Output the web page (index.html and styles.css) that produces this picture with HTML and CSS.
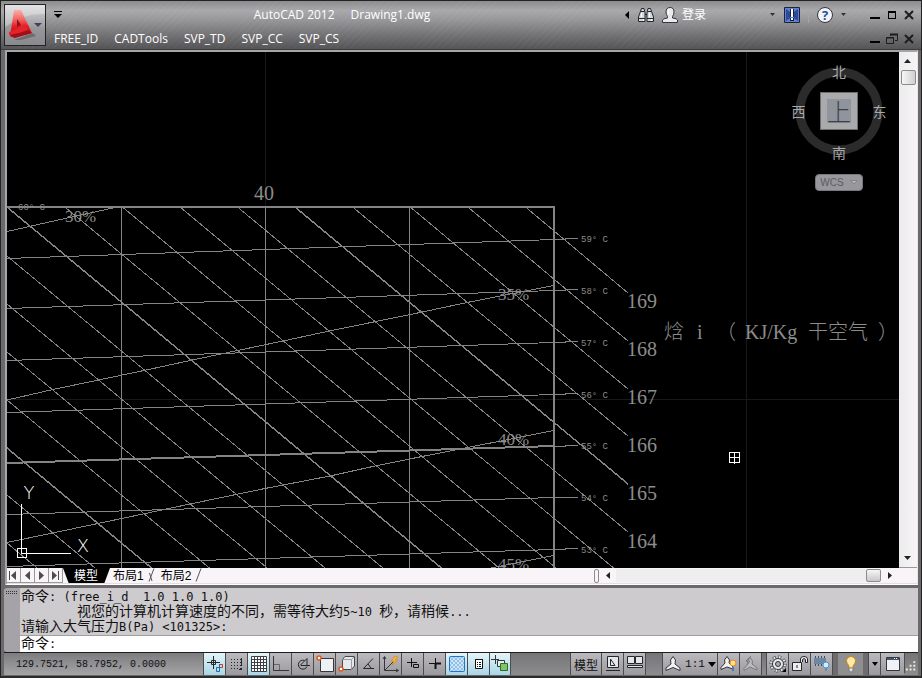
FILE: index.html
```html
<!DOCTYPE html>
<html lang="zh-CN">
<head>
    <meta charset="UTF-8">
    <meta name="viewport" content="width=device-width, initial-scale=1.0">
    <title>AutoCAD 2012 - Drawing1.dwg</title>
    <link rel="stylesheet" href="styles.css">
</head>
<body>
<header class="titlebar">
    <button class="app-button" aria-label="Application menu">
        <svg width="40" height="40" viewBox="0 0 40 40">
            <defs>
                <linearGradient id="appRed" x1="0" y1="0" x2="0" y2="1">
                    <stop offset="0" stop-color="#f9b0ac"/>
                    <stop offset="0.35" stop-color="#f0625e"/>
                    <stop offset="0.6" stop-color="#e11b22"/>
                    <stop offset="1" stop-color="#c8141b"/>
                </linearGradient>
            </defs>
            <path d="M0 22Q18 8 40 9V0H0z" fill="#fff" opacity=".3"/>
            <path d="M9 35L28 28L31 31L16 35z" fill="#4a4a4c" opacity=".5"/>
            <path d="M9 5H16L27 28L20 30L18 25L12 27L10 33L5 31z" fill="url(#appRed)"/>
            <path d="M12 14L16 20L12 22z" fill="#8f1216"/>
            <path d="M5 31L10 27L22 24L27 28L10 33z" fill="#a40f15"/>
            <path d="M4 27Q14 24 20 19L23 25Q13 29 4 30z" fill="#e3242a"/>
            <path d="M29 18H37L33 22z" fill="#3d4352"/>
        </svg>
    </button>
    <div class="title-rows">
        <div class="title-row">
            <button class="quick-access" aria-label="Customize toolbar">
                <svg width="8" height="8" viewBox="0 0 8 8"><path d="M0 0H8V1H0zM0 3H8L4 7z"/></svg>
            </button>
            <h1 class="title"><span>AutoCAD 2012</span><span>Drawing1.dwg</span></h1>
            <div class="infocenter">
                <button aria-label="Collapse"><svg width="6" height="10" viewBox="0 0 6 10"><path d="M5 1V9L1 5z"/></svg></button>
                <button aria-label="Search">
                    <svg width="16" height="16" viewBox="0 0 16 16" fill="#d5d9dd" stroke="#25282b">
                        <path d="M3.500 1.500H6L7 6V14.500H0.500V10z M10 1.500H12.500L15.500 10V14.500H9V6z"/>
                        <path d="M1 11.500H7M9 11.500H15M3 4.500H6M10 4.500H13M7 7.500H9"/>
                        <path d="M3.500 6V10M5.500 12V14M11.500 6V10M13.500 12V14" stroke="#fff"/>
                    </svg>
                </button>
                <button class="login">
                    <svg width="16" height="16" viewBox="0 0 16 16" fill="#e8eaee" stroke="#33363a">
                        <path d="M0.500 15.500V13Q1 11.500 5.500 11V9.500Q4 7.500 4 5Q4 0.500 8 0.500T12 5Q12 7.500 10.500 9.500V11Q15 11.500 15.500 13V15.500z"/>
                        <path d="M6.500 3V7" stroke="#fff"/>
                    </svg>
                    <span>登录</span>
                </button>
                <button class="drop login-drop" aria-label="Login options"><svg width="6" height="4" viewBox="0 0 6 4"><path d="M0 0H5L2.500 3z" fill="#333"/></svg></button>
                <button aria-label="Exchange">
                    <svg width="16" height="16" viewBox="0 0 16 16">
                        <path d="M0.500 0.500H15.500V15.500H0.500z" fill="#5f7fd0" stroke="#1c2338"/>
                        <path d="M2 2L6 5V11L2 14zM14 2L10 5V11L14 14z" fill="#2a4a9a"/>
                        <path d="M6 2H10V10H6zM6 11H10V14H6z" fill="#1a2238"/>
                        <path d="M7 2H9V10H7zM7 11H9V13H7z" fill="#fff"/>
                    </svg>
                </button>
                <span class="divider"></span>
                <button aria-label="Help">
                    <svg width="16" height="16" viewBox="0 0 16 16">
                        <circle cx="8" cy="8" r="7.500" fill="#f1f3f6" stroke="#33363a"/>
                        <text x="8" y="13" class="help-mark">?</text>
                    </svg>
                </button>
                <button class="drop" aria-label="Help options"><svg width="6" height="4" viewBox="0 0 6 4"><path d="M0 0H5L2.500 3z" fill="#333"/></svg></button>
            </div>
            <div class="window-buttons">
                <button aria-label="Minimize"><svg width="12" height="12" viewBox="0 0 12 12"><path d="M1 8H11V10H1z"/></svg></button>
                <button aria-label="Maximize"><svg width="12" height="12" viewBox="0 0 12 12"><path d="M2 2H10V10H2zM3 4V9H9V4z" fill-rule="evenodd"/></svg></button>
                <button aria-label="Close"><svg width="12" height="12" viewBox="0 0 12 12"><path d="M2 2L10 10M10 2L2 10" stroke="#1d1d1d" stroke-width="2"/></svg></button>
            </div>
        </div>
        <div class="title-row">
            <nav class="menu">
                <a href="#">FREE_ID</a>
                <a href="#">CADTools</a>
                <a href="#">SVP_TD</a>
                <a href="#">SVP_CC</a>
                <a href="#">SVP_CS</a>
            </nav>
            <div class="window-buttons doc-buttons">
                <button aria-label="Minimize drawing"><svg width="12" height="12" viewBox="0 0 12 12"><path d="M1 8H11V10H1z"/></svg></button>
                <button aria-label="Restore drawing"><svg width="12" height="12" viewBox="0 0 12 12" fill="none" stroke="#1d1d1d"><path d="M4.500 3V1.500H11.500V7.500H9M4 1H12V2H4M0.500 4.500H7.500V10.500H0.500zM0 5H8"/></svg></button>
                <button aria-label="Close drawing"><svg width="12" height="12" viewBox="0 0 12 12"><path d="M2 2L10 10M10 2L2 10" stroke="#1d1d1d" stroke-width="2"/></svg></button>
            </div>
        </div>
    </div>
</header>

<main class="workspace">
    <div class="view">
        <div class="canvas">
            <svg class="drawing">
                <g transform="translate(-7 -52)">
                    <path class="grid" d="M265.500 52V207M746.500 52V2000M7 399.500H3000"/>

                    <!-- chart frame and moisture lines -->
                    <path class="line" d="M121.500 207V2000M265.500 207V2000M409.500 207V2000"/>
                    <path class="line frame" d="M7 207H555M554 206V2000"/>

                    <!-- enthalpy lines -->
                    <path class="line" d="M525.500 207L628 293M467.800 207L628 341M410.200 207L628 389M352.600 207L628 436M237.500 207L628 532M180 207L628 580M122.400 207L628 628M64.900 207L628 675M7 256L554 710M7 304L554 758M7 352L554 806M7 400L554 854M7 495L554 949M7 543L554 997"/>
                    <path class="line major" d="M295 207L628 484M7 207L628 723M7 448L554 902"/>

                    <!-- isotherms -->
                    <path class="line" d="M7 258.500L554 239.500H565V238.500H578M7 308.500L554 290.500H565V289.500H578M7 360.500L554 342.500H565V341.500H578M7 412.500L554 394.500H565V393.500H578M554 446.500H565V445.500H578M7 514.500L554 497.500H578M7 566.500L554 549.500H565V548.500H578"/>
                    <path class="line frame" d="M7 463L554 446"/>

                    <!-- relative humidity curves -->
                    <path class="line" d="M7 231.500L65 218.500L113 208M7 400L53 389.500L144 370.500L190 360.500L290 339.500L327 331.500L420 312.500L467 302.500L554 285.500M7 542.500L98 523.500L143 514L190 504L265 488.500L330 476L375 466L422 456.500L554 430.500M491 568L554 555.500"/>

                    <g class="label">
                        <text x="254" y="200">40</text>
                        <text x="627" y="308">169</text>
                        <text x="627" y="356">168</text>
                        <text x="627" y="404">167</text>
                        <text x="627" y="452">166</text>
                        <text x="627" y="500">165</text>
                        <text x="627" y="548">164</text>
                        <text y="339"><tspan class="han" x="664">焓</tspan> <tspan x="697">i</tspan> <tspan class="han" x="716">（</tspan> <tspan x="745">KJ/Kg</tspan> <tspan class="han" x="808">干空气</tspan> <tspan class="han" x="878">）</tspan></text>
                    </g>
                    <g class="label humidity">
                        <text x="65" y="222">30%</text>
                        <text x="498" y="300">35%</text>
                        <text x="498" y="445">40%</text>
                        <text x="498" y="570">45%</text>
                    </g>
                    <g class="label degree">
                        <text x="18" y="210">60° C</text>
                        <text x="581" y="242">59° C</text>
                        <text x="581" y="294">58° C</text>
                        <text x="581" y="346">57° C</text>
                        <text x="581" y="398">56° C</text>
                        <text x="581" y="449">55° C</text>
                        <text x="581" y="501">54° C</text>
                        <text x="581" y="553">53° C</text>
                    </g>

                    <!-- UCS icon -->
                    <g class="ucs">
                        <path d="M21.500 504V553.500H71M17.500 548.500H26.500V557.500H17.500z"/>
                        <text x="29" y="499">Y</text>
                        <text x="83" y="552">X</text>
                    </g>

                    <!-- cursor -->
                    <path class="cursor" d="M729.500 452.500H739.500V462.500H729.500zM734.500 452V464M729 457.500H740"/>
                </g>
            </svg>
            <div class="viewcube">
                <svg class="ring" viewBox="0 0 98 98">
                    <circle cx="49" cy="49" r="39" fill="none" stroke="#2b2b2b" stroke-width="9"/>
                </svg>
                <span class="north">北</span>
                <span class="west">西</span>
                <button class="top">上</button>
                <span class="east">东</span>
                <span class="south">南</span>
                <button class="wcs">WCS <svg width="8" height="5" viewBox="0 0 8 5"><path d="M0.500 0.500H7.500L4 4z" fill="#b4b4b8" stroke="#85858b"/></svg></button>
            </div>
        </div>
        <div class="scroll-v">
            <button aria-label="Scroll up"><svg width="8" height="4" viewBox="0 0 8 4"><path d="M0 4H7L3.500 0z" fill="#222"/></svg></button>
            <span class="thumb"></span>
            <button class="down" aria-label="Scroll down"><svg width="8" height="4" viewBox="0 0 8 4"><path d="M0 0H7L3.500 4z" fill="#222"/></svg></button>
        </div>
    </div>
    <div class="tab-strip">
        <div class="tab-nav">
            <button aria-label="First layout"><svg width="9" height="9" viewBox="0 0 9 9"><path d="M0 0H1V9H0zM7 0V9L2 4.500z"/></svg></button>
            <button aria-label="Previous layout"><svg width="9" height="9" viewBox="0 0 9 9"><path d="M7 0V9L2 4.500z"/></svg></button>
            <button aria-label="Next layout"><svg width="9" height="9" viewBox="0 0 9 9"><path d="M2 0V9L7 4.500z"/></svg></button>
            <button aria-label="Last layout"><svg width="9" height="9" viewBox="0 0 9 9"><path d="M1 0V9L6 4.500zM7 0H8V9H7z"/></svg></button>
        </div>
        <button class="tab active">模型</button>
        <button class="tab">布局1</button>
        <svg class="slash" width="8" height="14" viewBox="0 0 8 14"><path d="M1 13.500L6 0.500M1.500 5L4 13"/></svg>
        <button class="tab">布局2</button>
        <svg class="slash" width="8" height="14" viewBox="0 0 8 14"><path d="M1 13.500L6 0.500"/></svg>
        <div class="scroll-h">
            <span class="splitter"></span>
            <button aria-label="Scroll left"><svg width="4" height="8" viewBox="0 0 4 8"><path d="M4 0V7L0 3.500z" fill="#222"/></svg></button>
            <span class="track"><span class="thumb"></span></span>
            <button aria-label="Scroll right"><svg width="4" height="8" viewBox="0 0 4 8"><path d="M0 0V7L4 3.500z" fill="#222"/></svg></button>
        </div>
    </div>
</main>

<section class="command">
    <div class="grip"></div>
    <div class="command-body">
        <div class="history">
            <p><span class="han">命令</span>: (free_i_d  1.0 1.0 1.0)</p>
            <p class="indent"><span class="han">视您的计算机计算速度的不同，需等待大约</span>5~10 <span class="han">秒，请稍候</span>...</p>
            <p><span class="han">请输入大气压力</span>B(Pa) &lt;101325&gt;:</p>
        </div>
        <div class="prompt">
            <label for="commandLine"><span class="han">命令</span>:</label>
            <input id="commandLine" type="text">
        </div>
    </div>
</section>

<footer class="statusbar">
    <span class="coords">129.7521, 58.7952, 0.0000</span>
    <div class="group">
        <button class="on" aria-label="Infer constraints">
            <svg width="20" height="20" viewBox="0 0 20 20" fill="none" stroke="#22282c">
                <path d="M2 8.500H15M8.500 2V15"/><path d="M6.500 6.500H10.500V10.500H6.500z"/>
                <path d="M14.500 10.500H17.500V13.500H14.500z" stroke="#c8381c"/><path d="M14.500 10V17.500H11.500V13.500H14" stroke="#2468b0"/>
            </svg>
        </button>
        <button aria-label="Snap">
            <svg width="20" height="20" viewBox="0 0 20 20" fill="none" stroke="#22282c">
                <path d="M4 5.500H14M4 8.500H14M4 11.500H14M4 14.500H14" stroke-dasharray="1 2"/><path d="M14.500 4V12M14.500 14V16M12 15.500H14"/>
            </svg>
        </button>
        <button class="on" aria-label="Grid">
            <svg width="20" height="20" viewBox="0 0 20 20" fill="#fff" stroke="#3a4044">
                <path d="M2.500 2.500H17.500V17.500H2.500zM5.500 2V18M8.500 2V18M11.500 2V18M14.500 2V18M2 5.500H18M2 8.500H18M2 11.500H18M2 14.500H18"/>
            </svg>
        </button>
        <button aria-label="Ortho">
            <svg width="20" height="20" viewBox="0 0 20 20" fill="none" stroke="#33373a">
                <path d="M2.500 2V16.500H18"/><path d="M3 10.500H8.500V16" stroke="#666"/>
            </svg>
        </button>
        <button aria-label="Polar tracking">
            <svg width="20" height="20" viewBox="0 0 20 20" fill="none" stroke="#22282c">
                <path d="M14 12.500A4.500 4.500 0 1 1 11.500 6.500"/><path d="M8 11.500H17M7 11.500L14 4.500V11"/>
            </svg>
        </button>
        <button aria-label="Object snap">
            <svg width="20" height="20" viewBox="0 0 20 20">
                <path d="M5.500 4.500H18.500V17.500H5.500z" fill="#eef1f3" stroke="#33373a"/>
                <circle cx="4" cy="4" r="2" fill="#fff" stroke="#e2571d" stroke-width="1.500"/>
            </svg>
        </button>
        <button aria-label="3D object snap">
            <svg width="20" height="20" viewBox="0 0 20 20" fill="#e6e9ec" stroke="#44484c">
                <path d="M5.500 5.500L8 2.500H17.500V12L14.500 15.500H5.500z"/><path d="M5.500 5.500H14.500V15.500M14.500 5.500L17.500 2.500" stroke="#9a9ea2"/>
                <circle cx="4" cy="15" r="2" fill="#fff" stroke="#e2571d" stroke-width="1.500"/>
            </svg>
        </button>
        <button aria-label="Object snap tracking">
            <svg width="20" height="20" viewBox="0 0 20 20" fill="none" stroke="#22282c"><path d="M14 4.500L4.500 14.500H15M9 10L12 14"/></svg>
        </button>
        <button aria-label="Dynamic UCS">
            <svg width="20" height="20" viewBox="0 0 20 20" fill="none" stroke="#33373a">
                <path d="M3.500 3V16.500H17M2 5L3.500 2.500L5 5M15 15L17.500 16.500L15 18M4 16L12 8"/>
                <path d="M14 2L10 7H13L11 11L17 6H14L17 3z" fill="#f7b733" stroke="#c9761a" stroke-width=".5"/>
            </svg>
        </button>
        <button aria-label="Dynamic input">
            <svg width="20" height="20" viewBox="0 0 20 20" fill="none" stroke="#111"><path d="M4 8.500H14M8.500 4V13M10.500 10.500H15.500V13.500H10.500z"/></svg>
        </button>
        <button aria-label="Lineweight">
            <svg width="20" height="20" viewBox="0 0 20 20" fill="none" stroke="#111"><path d="M4 9.500H11M10.500 4V10"/><path d="M10.500 9V15M10 9.500H16" stroke-width="2"/></svg>
        </button>
        <button class="on" aria-label="Transparency">
            <svg width="20" height="20" viewBox="0 0 20 20">
                <defs><pattern id="checks" width="4" height="4" patternUnits="userSpaceOnUse"><path d="M0 0H2V2H0zM2 2H4V4H2z" fill="#8fc0ea"/></pattern></defs>
                <rect x="2.500" y="2.500" width="15" height="15" rx="1" fill="#cfe6f8"/>
                <rect x="2.500" y="2.500" width="15" height="15" rx="1" fill="url(#checks)" stroke="#2574c4"/>
            </svg>
        </button>
        <button class="on" aria-label="Quick properties">
            <svg width="20" height="20" viewBox="0 0 20 20"><path d="M6.500 5.500H13.500V14.500H6.500z" fill="#fff" stroke="#111"/><path d="M6 5.500H14M8 8.500H9M10 8.500H12M8 10.500H9M10 10.500H12M8 12.500H9M10 12.500H12" stroke="#111"/></svg>
        </button>
        <button class="on last" aria-label="Selection cycling">
            <svg width="20" height="20" viewBox="0 0 20 20" stroke="#33373a">
                <path d="M1 5.500H9M5.500 1V10"/><path d="M7.500 6.500H14.500V12.500H7.500z" fill="#e8eef0"/><path d="M10.500 9.500H17.500V16.500H10.500z" fill="#7fc46a" stroke="#2c6c26"/>
            </svg>
        </button>
    </div>
    <div class="group right">
        <button class="model">模型</button>
        <button aria-label="Model view">
            <svg width="20" height="20" viewBox="0 0 20 20" stroke="#22282c">
                <path d="M4.500 2.500H15.500V13.500H4.500z" fill="#e6e6e8"/><path d="M7.500 5V11.500H12z" fill="none"/><path d="M3 16.500H17"/>
            </svg>
        </button>
        <button aria-label="Quick view layouts">
            <svg width="20" height="20" viewBox="0 0 20 20" stroke="#22282c">
                <path d="M2.500 2.500H9.500V9.500H2.500zM10.500 2.500H17.500V9.500H10.500z" fill="#e6e6e8"/><path d="M2.500 11.500H17.500V13.500H2.500z" fill="#e6e6e8"/>
            </svg>
        </button>
        <span class="gap"></span>
        <button class="scale" aria-label="Annotation scale">
            <svg width="18" height="18" viewBox="0 0 18 18"><path d="M9 1.500L11.500 5L11 9L16 13V15.500L9 12.500L2 15.500V13L7 9L6.500 5z" fill="#f0f0f2" stroke="#33373a"/></svg>
            <span>1:1</span>
            <svg width="8" height="5" viewBox="0 0 8 5"><path d="M0 0H8L4 5z"/></svg>
        </button>
        <button aria-label="Annotation visibility">
            <svg width="20" height="20" viewBox="0 0 20 20"><path d="M8 2.500L10.500 6L10 9L14 13V15L8 13L2 15.500V13.500L6 9L5.500 6z" fill="#f0f0f2" stroke="#33373a"/><circle cx="14" cy="9" r="3" fill="#ffdf8a" stroke="#ee8b1c"/><path d="M13 13H15V17H13z" fill="#3b7fc4"/></svg>
        </button>
        <button aria-label="Auto scale">
            <svg width="20" height="20" viewBox="0 0 20 20" fill="#bcbcc0" stroke="#77777c"><path d="M9 3.500L11.500 7L11 10L16 14V16L9 13L3 16.500V14.500L7 10L6.500 7z"/><path d="M10 2L5 7H9L6 11" fill="none"/></svg>
        </button>
        <span class="gap small"></span>
        <button aria-label="Workspace switching">
            <svg width="20" height="20" viewBox="0 0 20 20">
                <circle cx="10" cy="10" r="7" fill="none" stroke="#33373a" stroke-width="3" stroke-dasharray="3 2.500"/>
                <circle cx="10" cy="10" r="5.500" fill="#e9e9eb" stroke="#33373a"/>
                <circle cx="10" cy="10" r="7" fill="none" stroke="#e9e9eb" stroke-dasharray="2 3.500" stroke-dashoffset="-.5" stroke-width="2"/>
                <circle cx="10" cy="10" r="2.500" fill="#aaa" stroke="#33373a"/><path d="M18 14V18H14z"/>
            </svg>
        </button>
        <button aria-label="Lock toolbars">
            <svg width="20" height="20" viewBox="0 0 20 20" stroke="#22282c"><path d="M2.500 8.500H11.500V16.500H2.500z" fill="#eee"/><path d="M10.500 8V5Q10.500 2.500 14 2.500T17.500 5V8.500H15.500V5.500Q14 3.500 12.500 5.500V8" fill="#eee"/><path d="M7 11V14"/></svg>
        </button>
        <button aria-label="Hardware acceleration">
            <svg width="20" height="20" viewBox="0 0 20 20"><path d="M2 4H14V10H2z" fill="#6d87a0"/><path d="M3.500 2V4M6.500 2V4M9.500 2V4M12.500 2V4M3.500 10V12M6.500 10V12M9.500 10V12" stroke="#33506b"/><circle cx="14" cy="11" r="3" fill="#d6ecff" stroke="#4a8fd0"/><path d="M13 14H15V17H13z" fill="#5d8fb8"/></svg>
        </button>
        <button class="bulb" aria-label="Isolate objects">
            <svg width="20" height="20" viewBox="0 0 20 20"><path d="M10 2.500Q14.500 3 14.500 7Q14.500 9 12 12V14H8V12Q5.500 9 5.500 7Q5.500 3 10 2.500z" fill="#ffe9a6" stroke="#c98a20"/><path d="M8 14H12V16L10.500 18H9.500L8 16z" fill="#ddd" stroke="#555" stroke-width=".5"/></svg>
        </button>
        <button class="narrow" aria-label="Status bar menu"><svg width="6" height="4" viewBox="0 0 6 4"><path d="M0 0H6L3 4z"/></svg></button>
        <button class="clean" aria-label="Clean screen">
            <svg width="20" height="20" viewBox="0 0 20 20"><path d="M3.500 3.500H16.500V16.500H3.500z" fill="#f0f2f5" stroke="#33373a"/><path d="M4 4H16V6H4z" fill="#44566e"/><path d="M11 4.500H15" stroke="#fff" stroke-dasharray="1 1"/></svg>
        </button>
        <svg class="resize" width="14" height="20" viewBox="0 0 14 20" fill="#f4f0dc"><path d="M9 8H11V10H9zM5 12H7V14H5zM9 12H11V14H9zM1 16H3V18H1zM5 16H7V18H5zM9 16H11V18H9z"/></svg>
    </div>
</footer>
</body>
</html>
```
FILE: styles.css
```css
* {
    box-sizing: border-box;
}
body {
    margin: 0;
    min-height: 100vh;
    display: flex;
    flex-direction: column;
    background-color: #6b696c;
    border: 1px solid #232323;
    border-bottom: 2px solid #2b2b2b;
    font-family: "Open Sans", "Noto Sans CJK SC", sans-serif;
    font-size: 12px;
}
button {
    display: flex;
    align-items: center;
    justify-content: center;
    margin: 0;
    padding: 0;
    border: 0;
    background: none;
    color: inherit;
    font: inherit;
}
svg {
    display: block;
    flex: none;
}

/* title bar */
.titlebar {
    display: flex;
    height: 49px;
    padding: 3px 6px 0 3px;
    gap: 6px;
    background: repeating-linear-gradient(135deg, rgba(255, 255, 255, 0.03) 0 1px, transparent 1px 5px), linear-gradient(#8c8b8d, #a9a8aa 20%, #969597 40%, #6e6d6f 75%, #545355);
    border-bottom: 1px solid #3c3c3c;
    color: #fff;
}
.app-button {
    width: 42px;
    height: 42px;
    border: 1px solid #222;
    background: linear-gradient(#d8d8dc, #97979b 60%, #8a8a8e);
}
.title-rows {
    flex: 1;
    display: flex;
    flex-direction: column;
}
.title-row {
    display: flex;
    align-items: center;
    justify-content: space-between;
    height: 22px;
}
.quick-access {
    width: 12px;
}
.title {
    flex: 1;
    display: flex;
    justify-content: center;
    gap: 16px;
    margin: 0;
    padding: 0 4px 2px 0;
    font-size: 12px;
    font-weight: normal;
}
.infocenter {
    display: flex;
    align-items: center;
    gap: 8px;
}
.login {
    gap: 4px;
    font-size: 12px;
    line-height: 16px;
}
.login-drop {
    margin-left: 56px;
}
.divider {
    width: 1px;
    height: 16px;
    background-color: #a5a4a6;
}
.help-mark {
    fill: #1d4fa8;
    font: bold 13px "Open Sans", sans-serif;
    text-anchor: middle;
}
.window-buttons {
    display: flex;
    gap: 5px;
    margin-left: 22px;
    color: #1d1d1d;
}
.menu {
    display: flex;
    gap: 16px;
    padding: 2px 0 0 2px;
}
.menu a {
    color: #fff;
    text-decoration: none;
}
.doc-buttons {
    padding-top: 4px;
}

/* drawing window */
.workspace {
    flex: 1;
    display: flex;
    flex-direction: column;
    margin: 0 3px 0 4px;
    border: 1px solid #fff;
    border-width: 2px 1px 1px 2px;
    border-color: #a5a4a6 #e8e8e8 #fff #a5a4a6;
    background-color: #f8f4f8;
}
.view {
    flex: 1;
    display: flex;
}
.canvas {
    position: relative;
    flex: 1;
    background-color: #000;
    overflow: hidden;
}
/* lies under the view cube */
.drawing {
    position: absolute;
    inset: 0;
    width: 100%;
    height: 100%;
}
.drawing path {
    fill: none;
    shape-rendering: crispEdges;
}
.grid {
    stroke: #17171c;
}
.line {
    stroke: #848484;
}
.line.frame {
    stroke-width: 2;
}
.line.major {
    stroke-width: 1.5;
}
.label {
    fill: #8c8c8c;
    font-family: "Liberation Serif", serif;
    font-size: 20px;
}
.label .han {
    font-family: "Noto Sans CJK SC", sans-serif;
    font-weight: 300;
}
.label.humidity {
    font-size: 17px;
}
.label.degree {
    font-family: "Liberation Mono", monospace;
    font-size: 9px;
}
.ucs path,
.cursor {
    stroke: #fff;
}
.ucs text {
    fill: #fff;
    font-family: "DejaVu Sans", sans-serif;
    font-size: 18px;
    font-weight: 200;
    text-anchor: middle;
}
.viewcube {
    position: absolute;
    top: 10px;
    right: 11px;
    display: grid;
    grid-template: 17px 64px 17px / 17px 64px 17px;
    place-items: center;
    color: #a9a9a9;
    font-family: "Noto Sans CJK SC", sans-serif;
    font-size: 14px;
    line-height: 14px;
}
.ring {
    grid-area: 1 / 1 / 4 / 4;
    width: 98px;
}
.north {
    grid-area: 1 / 2;
}
.west {
    grid-area: 2 / 1;
}
.top {
    grid-area: 2 / 2;
    width: 38px;
    height: 38px;
    border: 1px solid #6e6e70;
    background: linear-gradient(#8f949d, #8f949d) center / 24px 24px no-repeat #aaa9ac;
    color: #3d4145;
    font-size: 24px;
    font-weight: 300;
}
.east {
    grid-area: 2 / 3;
}
.south {
    grid-area: 3 / 2;
}
.wcs {
    grid-area: 4 / 2;
    width: 48px;
    height: 17px;
    margin-top: 14px;
    gap: 6px;
    border: 1px solid #77777e;
    border-radius: 4px;
    background-color: #97979d;
    color: #5c5c64;
    font: 10px "Liberation Sans", sans-serif;
}

/* scrollbars */
.scroll-v {
    display: flex;
    flex-direction: column;
    align-items: center;
    width: 18px;
    border-bottom: 1px solid #999;
    background: linear-gradient(90deg, #ececec, #f8f4f8);
}
.scroll-v button {
    width: 16px;
    height: 18px;
}
.scroll-v .down {
    margin-top: auto;
}
.thumb {
    width: 15px;
    height: 15px;
    border: 1px solid #8c8c8c;
    border-radius: 2px;
    background: linear-gradient(90deg, #f6f6f6, #d0d0d4);
}
.scroll-h {
    flex: 1;
    display: flex;
    align-items: center;
    max-width: 323px;
    margin-left: auto;
    padding-right: 19px;
}
.scroll-h button {
    width: 17px;
    height: 14px;
}
.splitter {
    width: 5px;
    height: 14px;
    border: 1px solid #8c8c8c;
    border-radius: 2px;
}
.track {
    flex: 1;
    display: flex;
    justify-content: flex-end;
    background-color: #eee;
}
.scroll-h .thumb {
    height: 13px;
    background: linear-gradient(#f6f6f6, #c8c8cc);
}

/* layout tabs */
.tab-strip {
    display: flex;
    height: 16px;
    border-bottom: 1px solid #e2dfe2;
    color: #000;
    font-family: "Liberation Sans", "Noto Sans CJK SC", sans-serif;
    line-height: 14px;
}
.tab-nav {
    display: flex;
}
.tab-nav button {
    width: 14px;
    border-right: 1px solid #999;
    border-bottom: 1px solid #999;
}
.tab-nav path {
    fill: #4c4c4c;
}
.tab {
    padding: 0 2px 0 3px;
}
.tab.active {
    padding: 0 12px 0 11px;
    background-color: #000;
    color: #fff;
    clip-path: polygon(0 0, 100% 0, 88% 100%, 12% 100%);
}
.slash {
    margin: 0 2px;
    fill: none;
    stroke: #555;
}

/* command line */
.command {
    display: flex;
    margin: 3px 3px 0;
    border-bottom: 1px solid #1d1d1d;
}
.grip {
    width: 16px;
    border-radius: 3px 0 0 3px;
    background: repeating-linear-gradient(90deg, #333 0 1px, transparent 1px 2px) 2px 3px / 12px 1px no-repeat, repeating-linear-gradient(90deg, #333 0 1px, transparent 1px 2px) 2px 5px / 12px 1px no-repeat, #a5a3a7;
}
.command-body {
    flex: 1;
    background-color: #fff;
    color: #111;
}
.history,
.prompt,
.prompt input {
    font-family: "DejaVu Sans Mono", monospace;
    font-size: 12px;
}
.history {
    padding: 2px 1px 0;
    border-bottom: 1px solid #a0a0a0;
    background-color: #cdcbce;
}
.history p {
    margin: 0 0 1px;
    line-height: 14px;
    white-space: pre;
}
.history .indent {
    padding-left: 56px;
}
.command .han {
    font-family: "Noto Sans CJK SC", sans-serif;
    font-size: 14px;
    line-height: 0;
}
.prompt {
    display: flex;
    align-items: center;
    height: 16px;
    padding-left: 1px;
}
.prompt input {
    flex: 1;
    height: 15px;
    padding: 0 4px;
    border: 0;
    outline: 0;
    background: none;
}

/* status bar */
.statusbar {
    display: flex;
    align-items: stretch;
    height: 22px;
    margin: 0 3px 1px;
    background: linear-gradient(#757477, #8d8c8f);
    color: #111;
    font-size: 12px;
}
.coords {
    align-self: stretch;
    width: 199px;
    padding-left: 12px;
    background: linear-gradient(#7d7c7f, #a5a4a7);
    font: 10px "Liberation Mono", monospace;
    line-height: 24px;
}
.group {
    display: flex;
}
.group.right {
    margin-left: auto;
}
.group button {
    width: 22px;
    border-left: 1px solid #4c4b4e;
    background: linear-gradient(#bcbabf, #9a999d);
}
.group button.on {
    background: linear-gradient(#e4f4f8, #a8d6e6);
}
.group .last {
    border-right: 1px solid #4c4b4e;
}
.group .model {
    width: 31px;
    font-family: "Noto Sans CJK SC", sans-serif;
}
.group .scale {
    width: 55px;
    gap: 3px;
    font-family: "Liberation Mono", monospace;
    font-size: 11px;
}
.group .bulb {
    width: 36px;
    background: linear-gradient(90deg, #6d6c6f 5px, #8f8e91 5px 30px, #6d6c6f 30px);
}
.group .narrow {
    width: 12px;
}
.group .clean {
    width: 24px;
}
.gap {
    width: 17px;
    border-left: 1px solid #4c4b4e;
}
.gap.small {
    width: 5px;
}
.resize {
    border-left: 1px solid #4c4b4e;
}
```
